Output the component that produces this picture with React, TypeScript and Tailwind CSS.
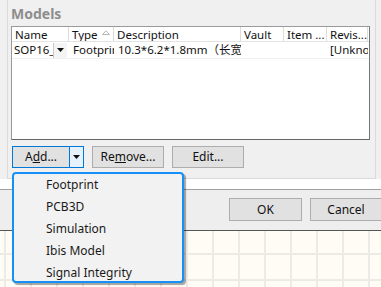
import React from "react";

const font = { fontFamily: '"Noto Sans", "Noto Sans CJK SC", sans-serif' };

function Tri({ className = "" }: { className?: string }) {
  return (
    <svg width="7" height="4" viewBox="0 0 7 4" className={className}>
      <path d="M0 0H7L3.5 4Z" fill="#111" />
    </svg>
  );
}

const cols = [
  { label: "Name", w: "w-[57px]" },
  { label: "Type", w: "w-[45px]", sort: true },
  { label: "Description", w: "w-[127px]" },
  { label: "Vault", w: "w-[43px]" },
  { label: "Item ...", w: "w-[43px]" },
  { label: "Revis...", w: "w-[41px]" },
];

const items = ["Footprint", "PCB3D", "Simulation", "Ibis Model", "Signal Integrity"];

export default function App() {
  return (
    <div
      className="relative w-[381px] h-[287px] overflow-hidden bg-[#f0f0f0] flex flex-col text-[11.5px] text-[#111]"
      style={font}
    >
      {/* group panel */}
      <div className="h-[179px] pl-[7px] pr-[5px] shrink-0">
        <div className="h-full border-l border-r border-b border-[#dadada] flex flex-col">
          <div className="pl-[3px] pt-[5px] h-[23px] text-[14px] leading-[18px] font-bold text-[#8d8d8d]">Models</div>
          {/* table */}
          <div className="ml-[3px] mt-[3px] w-[359px] h-[114px] bg-white border border-[#9a9a9a] border-b-[#666] border-r-[#777] flex flex-col">
            <div className="flex h-[15px] border-b border-[#e3e3e3] leading-[15px]">
              {cols.map((c) => (
                <div key={c.label} className={`${c.w} shrink-0 border-r border-[#dcdcdc] pl-[3px] flex items-center whitespace-nowrap overflow-x-hidden`}>
                  <span>{c.label}</span>
                  {c.sort && (
                    <svg width="8" height="5" viewBox="0 0 8 5" className="ml-[4px] mt-[-4px]">
                      <path d="M0.5 4.5L4 0.8L7.5 4.5Z" fill="none" stroke="#b8b8b8" strokeWidth="1" />
                    </svg>
                  )}
                </div>
              ))}
            </div>
            <div className="flex h-[17px] border-b border-[#f0f0f0] leading-[16px] whitespace-nowrap">
              <div className="w-[57px] shrink-0 flex items-center pl-[2px]">
                <span className="w-[39px] overflow-x-hidden">SOP16_</span>
                <div className="w-[14px] h-[15px] bg-[#f4f4f4] border-l border-[#c8c8c8] flex items-center justify-center">
                  <Tri />
                </div>
              </div>
              <div className="w-[45px] shrink-0 pl-[4px] overflow-x-hidden">Footprint</div>
              <div className="w-[127px] shrink-0 pl-[4px] overflow-x-hidden">10.3*6.2*1.8mm（长宽高）</div>
              <div className="w-[43px] shrink-0" />
              <div className="w-[43px] shrink-0" />
              <div className="w-[41px] shrink-0 pl-[3px] overflow-x-hidden">[Unknown]</div>
            </div>
          </div>
          {/* buttons */}
          <div className="ml-[4px] mt-[6px] flex gap-[8px] h-[22px] leading-[20px] text-[12px]">
            <div className="w-[72px] flex border border-[#0078d7]">
              <div className="w-[57px] bg-[#e1e1e1] border-r border-[#0078d7] text-center">
                A<span className="underline">d</span>d...
              </div>
              <div className="flex-1 bg-[#e5f1fb] flex items-center justify-center">
                <Tri />
              </div>
            </div>
            <div className="w-[72px] border border-[#adadad] bg-[#e1e1e1] text-center">
              Re<span className="underline">m</span>ove...
            </div>
            <div className="w-[72px] border border-[#adadad] bg-[#e1e1e1] text-center">Edit...</div>
          </div>
        </div>
      </div>
      {/* white strip */}
      <div className="h-[10px] bg-white shrink-0" />
      <div className="h-[1px] bg-[#a0a0a0] shrink-0" />
      {/* bottom bar */}
      <div className="h-[40px] bg-[#eeeeee] shrink-0 flex justify-end items-start pt-[8px] gap-[8px] text-[12px]">
        <div className="w-[73px] h-[23px] border border-[#adadad] bg-[#e1e1e1] text-center leading-[21px]">OK</div>
        <div className="w-[72px] h-[23px] border border-[#adadad] bg-[#e1e1e1] text-center leading-[21px] mr-[-1px]">Cancel</div>
      </div>
      <div className="h-[1px] bg-[#555] shrink-0" />
      {/* canvas */}
      <div className="flex-1 bg-[#fffcf6] bg-[linear-gradient(to_right,#ecebe6_2px,transparent_2px),linear-gradient(to_bottom,#ecebe6_2px,transparent_2px)] bg-[size:26px_26px] bg-[position:4px_22px]" />

      {/* dropdown menu */}
      <div className="absolute left-[12px] top-[172px] w-[172px] h-[111px] rounded-[4px] border-2 border-[#1591f5] bg-[#f2f2f2] shadow-[2px_2px_1px_rgba(0,0,0,0.35)] overflow-hidden">
        {items.map((it) => (
          <div key={it} className="h-[22px] leading-[22px] pl-[32px] text-[12px] text-[#1a1a1a] whitespace-nowrap">
            {it}
          </div>
        ))}
      </div>
    </div>
  );
}
